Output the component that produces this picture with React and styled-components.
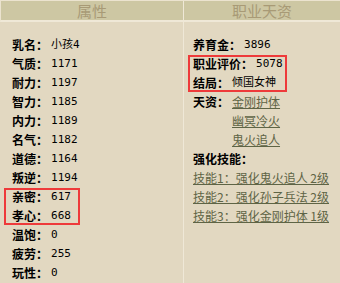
import React from 'react';
import styled, { createGlobalStyle } from 'styled-components';

const GlobalStyle = createGlobalStyle`
   html, body {
      margin: 0;
      padding: 0;
      background: #e2d8c1;
   }
`;

const leftRows = [
   { label: '乳名', value: '小孩4' },
   { label: '气质', value: '1171' },
   { label: '耐力', value: '1197' },
   { label: '智力', value: '1185' },
   { label: '内力', value: '1189' },
   { label: '名气', value: '1182' },
   { label: '道德', value: '1164' },
   { label: '叛逆', value: '1194' },
];

const boxedRows = [
   { label: '亲密', value: '617' },
   { label: '孝心', value: '668' },
];

const tailRows = [
   { label: '温饱', value: '0' },
   { label: '疲劳', value: '255' },
   { label: '玩性', value: '0' },
];

const talents = ['金刚护体', '幽冥冷火', '鬼火追人'];

const skills = [
   '技能1：强化鬼火追人 2级',
   '技能2：强化孙子兵法 2级',
   '技能3：强化金刚护体 1级',
];

const Row = ({ label, value }) => (
   <Line>
      <Label>{label}：</Label>
      <Value>{value}</Value>
   </Line>
);

const App = () => {
   return (
      <Wrapper>
         <GlobalStyle />
         <Head>
            <HeadCell>属性</HeadCell>
            <HeadCell>职业天资</HeadCell>
         </Head>
         <Body>
            <Column>
               {leftRows.map((r) => (
                  <Row key={r.label} {...r} />
               ))}
               <Marked $left="-8px" $width="76px">
                  {boxedRows.map((r) => (
                     <Row key={r.label} {...r} />
                  ))}
               </Marked>
               {tailRows.map((r) => (
                  <Row key={r.label} {...r} />
               ))}
            </Column>
            <Column>
               <Row label="养育金" value="3896" />
               <Marked $left="-5px" $width="99px">
                  <Row label="职业评价" value="5078" />
                  <Row label="结局" value="倾国女神" />
               </Marked>
               <Line>
                  <Label>天资：</Label>
                  <Links>
                     {talents.map((t) => (
                        <Link key={t}>{t}</Link>
                     ))}
                  </Links>
               </Line>
               <Line>
                  <Label>强化技能：</Label>
               </Line>
               {skills.map((s) => (
                  <Line key={s}>
                     <Link>{s}</Link>
                  </Line>
               ))}
            </Column>
         </Body>
      </Wrapper>
   );
};

const Wrapper = styled.div`
   width: 340px;
   height: 283px;
   overflow: hidden;
   background-color: #e2d8c1;
   font-family: 'Noto Sans CJK SC', 'Noto Sans', sans-serif;
   font-size: 12px;
   color: #000;
   border-top: 1px solid #ebe3cf;
   box-sizing: border-box;
`;

const Head = styled.div`
   display: grid;
   grid-template-columns: 182px 1fr;
   background-color: #cdc7a3;
   border-bottom: 2px solid #efe8d7;
   border-left: 1px solid #ebe3cf;
`;

const HeadCell = styled.div`
   height: 19px;
   line-height: 19px;
   text-align: center;
   font-size: 15px;
   color: #a89a76;

   & + & {
      border-left: 1px solid #efe8d7;
   }
`;

const Body = styled.div`
   display: grid;
   grid-template-columns: 183px 1fr;
   height: 100%;
`;

const Column = styled.div`
   display: flex;
   flex-direction: column;
   align-items: flex-start;
   padding: 13px 0 0 12px;

   & + & {
      border-left: 1px solid #efe8d7;
      padding-left: 9px;
   }
`;

const Marked = styled.div`
   position: relative;
   display: flex;
   flex-direction: column;

   &::after {
      content: '';
      position: absolute;
      top: 1px;
      bottom: 0;
      left: ${(p) => p.$left};
      width: ${(p) => p.$width};
      border: 2px solid #ee3a3a;
      box-sizing: border-box;
   }
`;

const Line = styled.div`
   display: flex;
   align-items: flex-start;
   min-height: 19px;
   line-height: 19px;
   white-space: nowrap;
`;

const Label = styled.span`
   font-weight: bold;
   margin-right: 3px;
`;

const Value = styled.span`
   font-family: 'DejaVu Sans Mono', 'Noto Sans CJK SC', monospace;
   font-size: 11px;
`;

const Links = styled.div`
   display: flex;
   flex-direction: column;
`;

const Link = styled.span`
   display: block;
   height: 19px;
   color: #5e6445;
   text-decoration: underline;
`;

export default App;
